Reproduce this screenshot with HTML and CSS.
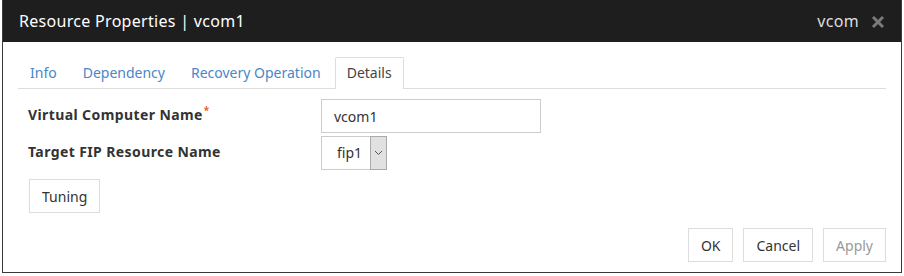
FILE: index.html
```html
<!DOCTYPE html>
<html lang="en">
<head>
    <meta charset="UTF-8">
    <title>Resource Properties | vcom1</title>
    <link rel="stylesheet" href="styles.css">
</head>
<body>
    <div class="dialog">
        <!-- Title bar -->
        <div class="dialog-header">
            <span class="dialog-title">Resource Properties | vcom1</span>
            <span class="dialog-server">vcom</span>
            <span class="dialog-close">
                <svg width="14" height="14" viewBox="0 0 14 14">
                    <path d="M2 2 L12 12 M12 2 L2 12" stroke="#7a7a7a" stroke-width="3"/>
                </svg>
            </span>
        </div>

        <div class="dialog-body">
            <!-- Tabs -->
            <div class="tabs">
                <div class="tab">Info</div>
                <div class="tab">Dependency</div>
                <div class="tab">Recovery Operation</div>
                <div class="tab active">Details</div>
            </div>

            <!-- Form -->
            <div class="form">
                <div class="row">
                    <label class="field-label">Virtual Computer Name<span class="required">*</span></label>
                    <input class="text-input" type="text" value="vcom1">
                </div>
                <div class="row">
                    <label class="field-label">Target FIP Resource Name</label>
                    <div class="select">
                        <span class="select-value">fip1</span>
                        <span class="select-arrow">
                            <svg width="9" height="6" viewBox="0 0 9 6">
                                <path d="M1 1 L4.5 4.5 L8 1" fill="none" stroke="#555" stroke-width="1"/>
                            </svg>
                        </span>
                    </div>
                </div>
                <button class="btn tuning">Tuning</button>
            </div>

            <!-- Footer buttons -->
            <div class="footer">
                <button class="btn">OK</button>
                <button class="btn">Cancel</button>
                <button class="btn disabled">Apply</button>
            </div>
        </div>
    </div>
</body>
</html>
```

FILE: styles.css
```css
body {
    margin: 0;
    background: #fff;
    font-family: "Noto Sans", "Open Sans", sans-serif;
    color: #333;
}
.dialog {
    width: 898px;
    height: 272px;
    margin-left: 2px;
    border: 1px solid #3a3a3a;
    border-top: none;
    background: #fff;
}
.dialog-header {
    height: 42px;
    background: #1e1e1e;
    display: flex;
    align-items: center;
    padding: 0 16px 0 16px;
}
.dialog-title {
    flex: 1;
    color: #fff;
    font-size: 16px;
    letter-spacing: 0.3px;
}
.dialog-server {
    color: #ddd;
    font-size: 16px;
    letter-spacing: 0.3px;
    margin-right: 12px;
}
.dialog-close {
    display: flex;
    margin-top: 1px;
}
.dialog-body {
    padding: 15px 15px 0 15px;
    display: flex;
    flex-direction: column;
}
.tabs {
    display: flex;
    border-bottom: 1px solid #ddd;
    height: 31px;
}
.tab {
    padding: 0 11px;
    margin-right: 2px;
    line-height: 30px;
    font-size: 14px;
    color: #4a86c8;
    border: 1px solid transparent;
    border-bottom: none;
}
.tab.active {
    color: #444;
    background: #fff;
    border-color: #ddd;
    height: 31px;
    border-radius: 2px 2px 0 0;
}
.form {
    padding: 10px 0 0 10px;
    display: flex;
    flex-direction: column;
    align-items: flex-start;
}
.row {
    display: flex;
    align-items: center;
    margin-bottom: 3px;
}
.field-label {
    width: 293px;
    font-size: 14px;
    font-weight: bold;
    letter-spacing: 0.4px;
    color: #333;
    margin-top: -3px;
}
.required {
    color: #e8632e;
    font-size: 10px;
    vertical-align: top;
    position: relative;
    top: -2px;
    margin-left: 1px;
}
.text-input {
    width: 220px;
    height: 34px;
    box-sizing: border-box;
    border: 1px solid #ccc;
    padding: 0 12px;
    font-family: inherit;
    font-size: 14px;
    color: #333;
}
.select {
    display: flex;
    height: 34px;
    box-sizing: border-box;
    border: 1px solid #ccc;
}
.select-value {
    padding: 0 0 0 15px;
    width: 33px;
    line-height: 32px;
    font-size: 14px;
}
.select-arrow {
    width: 15px;
    background: #e1e1e1;
    border: 1px solid #aaa;
    margin: -1px -1px -1px 0;
    display: flex;
    align-items: center;
    justify-content: center;
}
.btn {
    height: 34px;
    padding: 0 12px;
    background: #fff;
    border: 1px solid #ddd;
    font-family: inherit;
    font-size: 14px;
    color: #333;
    cursor: pointer;
}
.btn.tuning {
    margin-top: 6px;
    margin-left: 1px;
}
.btn.disabled {
    color: #999;
}
.footer {
    display: flex;
    justify-content: flex-end;
    gap: 10px;
    margin-top: 15px;
}
```
